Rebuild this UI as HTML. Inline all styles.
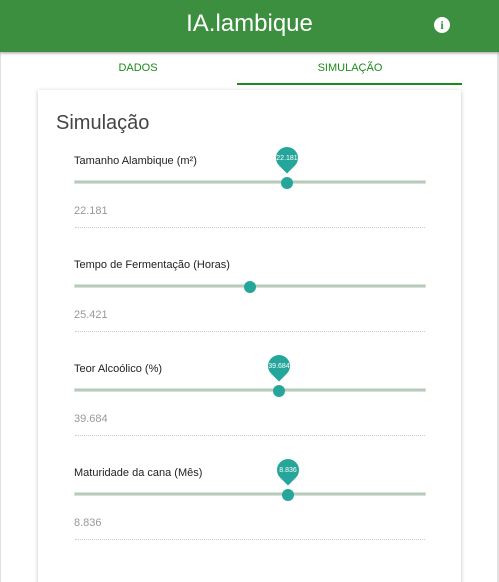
<!DOCTYPE html>
<html><head><meta charset="utf-8"><style>
*{box-sizing:border-box;margin:0;padding:0}
html,body{width:499px;height:582px;overflow:hidden}
body{background:#fff;font-family:"Liberation Sans",Roboto,sans-serif;position:relative}
.bl{position:absolute;left:0;top:0;width:1px;height:582px;background:#e0e0e0}
.br{position:absolute;left:497px;top:0;width:2px;height:582px;background:#e0e0e0}
.hdr{position:absolute;left:0;top:0;width:499px;height:52px;background:#3b8f3f;box-shadow:0 1px 3px rgba(0,0,0,.4)}
.hdr h1{position:absolute;left:0;right:0;top:10px;text-align:center;color:#fff;font-weight:normal;font-size:24px}
.info{position:absolute;left:434px;top:17px;width:16px;height:16px;border-radius:50%;background:#fff;color:#3b8f3f;font:bold 12px "Liberation Serif",serif;text-align:center;line-height:16px}
.tab{position:absolute;top:62px;font-size:11px;color:#1c8a1c;text-align:center}
.ind{position:absolute;left:237px;top:83px;width:225px;height:2px;background:#1c8a1c}
.card{position:absolute;left:38px;top:90px;width:423px;height:520px;background:#fff;box-shadow:0 1px 4px rgba(0,0,0,.25)}
.title{position:absolute;left:56px;top:112px;font-size:20px;color:#444}
.lbl{position:absolute;left:74px;font-size:11px;color:#222}
.trk{position:absolute;left:74px;width:352px;height:4px;background:#bfc6bf;border:1px solid #d3e6d3}
.th{position:absolute;width:12px;height:12px;border-radius:50%;background:#26a69a}
.pin{position:absolute;width:22px;height:22px;border-radius:50% 50% 50% 0;background:#26a69a;transform:rotate(-45deg)}
.pt{position:absolute;width:30px;text-align:center;font-size:7px;color:#fff}
.val{position:absolute;left:74px;font-size:11px;color:#999}
.ln{position:absolute;left:75px;width:350px;border-top:1px dotted #ccc}
</style></head><body>
<div class="bl"></div><div class="br"></div>
<div class="hdr"><h1>IA.lambique</h1><div class="info">i</div></div>
<div class="tab" style="left:100px;width:76px">DADOS</div>
<div class="tab" style="left:300px;width:100px">SIMULAÇÃO</div>
<div class="ind"></div>
<div class="card"></div>
<div class="title">Simulação</div>

<div class="lbl" style="top:155px">Tamanho Alambique (m²)</div>
<div class="trk" style="top:180px"></div>
<div class="pin" style="left:276px;top:147px"></div><div class="pt" style="left:272px;top:155px">22.181</div>
<div class="th" style="left:281px;top:177px"></div>
<div class="val" style="top:205px">22.181</div><div class="ln" style="top:227px"></div>

<div class="lbl" style="top:259px">Tempo de Fermentação (Horas)</div>
<div class="trk" style="top:284px"></div>
<div class="th" style="left:244px;top:281px"></div>
<div class="val" style="top:309px">25.421</div><div class="ln" style="top:331px"></div>

<div class="lbl" style="top:363px">Teor Alcoólico (%)</div>
<div class="trk" style="top:388px"></div>
<div class="pin" style="left:268px;top:355px"></div><div class="pt" style="left:264px;top:363px">39.684</div>
<div class="th" style="left:273px;top:385px"></div>
<div class="val" style="top:413px">39.684</div><div class="ln" style="top:435px"></div>

<div class="lbl" style="top:467px">Maturidade da cana (Mês)</div>
<div class="trk" style="top:492px"></div>
<div class="pin" style="left:277px;top:459px"></div><div class="pt" style="left:273px;top:467px">8.836</div>
<div class="th" style="left:282px;top:489px"></div>
<div class="val" style="top:517px">8.836</div><div class="ln" style="top:539px"></div>
</body></html>
